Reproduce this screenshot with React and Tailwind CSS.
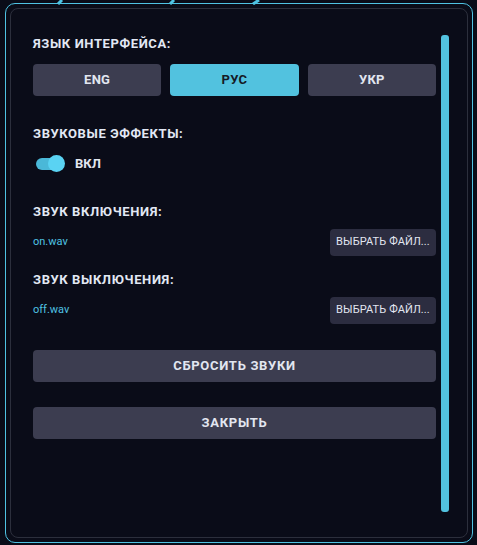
import React from "react";

const font = { fontFamily: "Roboto, 'Noto Sans', sans-serif" };

function Heading({ children, className = "" }) {
  return (
    <div className={"text-[13px] leading-[16px] font-bold tracking-[0.6px] text-[#e2e8f4] " + className}>
      {children}
    </div>
  );
}

function FileRow({ name, className = "" }) {
  return (
    <div className={"flex items-center justify-between " + className}>
      <span className="text-[11px] text-[#4fc3e3]">{name}</span>
      <button className="h-[27px] w-[106px] rounded-[4px] bg-[#2c2d40] text-[11px] tracking-[0.1px] text-[#e2e6f0]">
        ВЫБРАТЬ ФАЙЛ...
      </button>
    </div>
  );
}

export default function App() {
  return (
    <div style={font} className="relative w-[477px] h-[545px] bg-[#0a0c18] pt-[3px] pb-[2px] pl-[5px] pr-[4px]">
      <svg className="absolute left-0 top-0" width="477" height="5" viewBox="0 0 477 5">
        <path d="M58 4 L62 0" stroke="#4fc3e3" strokeWidth="3" />
        <path d="M170 4 L174 0" stroke="#4fc3e3" strokeWidth="3" />
        <path d="M253 4 L259 0" stroke="#4fc3e3" strokeWidth="3" />
      </svg>
      <div className="h-full rounded-[10px] border border-[#4fc3e3] p-[4px]">
        <div className="h-full rounded-[8px] border border-[#2c2f3c] flex">
          <div className="flex-1 pl-[22px] pr-[5px] pt-[27px] flex flex-col">
            <Heading>ЯЗЫК ИНТЕРФЕЙСА:</Heading>
            <div className="mt-[12px] flex gap-[9px]">
              <button className="h-[32px] flex-1 rounded-[4px] bg-[#3c3d50] text-[13px] font-bold tracking-[0.3px] text-[#e2e6f0]">ENG</button>
              <button className="h-[32px] flex-1 rounded-[4px] bg-[#52c2df] text-[13px] font-bold tracking-[0.3px] text-[#161a26]">РУС</button>
              <button className="h-[32px] flex-1 rounded-[4px] bg-[#3c3d50] text-[13px] font-bold tracking-[0.3px] text-[#e2e6f0]">УКР</button>
            </div>
            <Heading className="mt-[30px]">ЗВУКОВЫЕ ЭФФЕКТЫ:</Heading>
            <div className="mt-[13px] h-[18px] flex items-center pl-[3px]">
              <div className="relative w-[27px] h-[12px] rounded-full bg-[#4ab8d8]">
                <div className="absolute right-[-2px] top-[-3px] w-[17px] h-[17px] rounded-full bg-[#5ad3f3]" />
              </div>
              <span className="ml-[12px] text-[13px] font-bold text-[#e2e6f0]">ВКЛ</span>
            </div>
            <Heading className="mt-[31px]">ЗВУК ВКЛЮЧЕНИЯ:</Heading>
            <FileRow name="on.wav" className="mt-[9px]" />
            <Heading className="mt-[16px]">ЗВУК ВЫКЛЮЧЕНИЯ:</Heading>
            <FileRow name="off.wav" className="mt-[9px]" />
            <button className="mt-[26px] h-[32px] w-full rounded-[4px] bg-[#3c3d50] text-[13px] font-bold tracking-[0.7px] text-[#e2e6f0]">СБРОСИТЬ ЗВУКИ</button>
            <button className="mt-[25px] h-[32px] w-full rounded-[4px] bg-[#3c3d50] text-[13px] font-bold tracking-[0.7px] text-[#e2e6f0]">ЗАКРЫТЬ</button>
          </div>
          <div className="w-[8px] mt-[26px] mb-[25px] mr-[18px] rounded-[3px] bg-[#52c2df]" />
        </div>
      </div>
    </div>
  );
}
